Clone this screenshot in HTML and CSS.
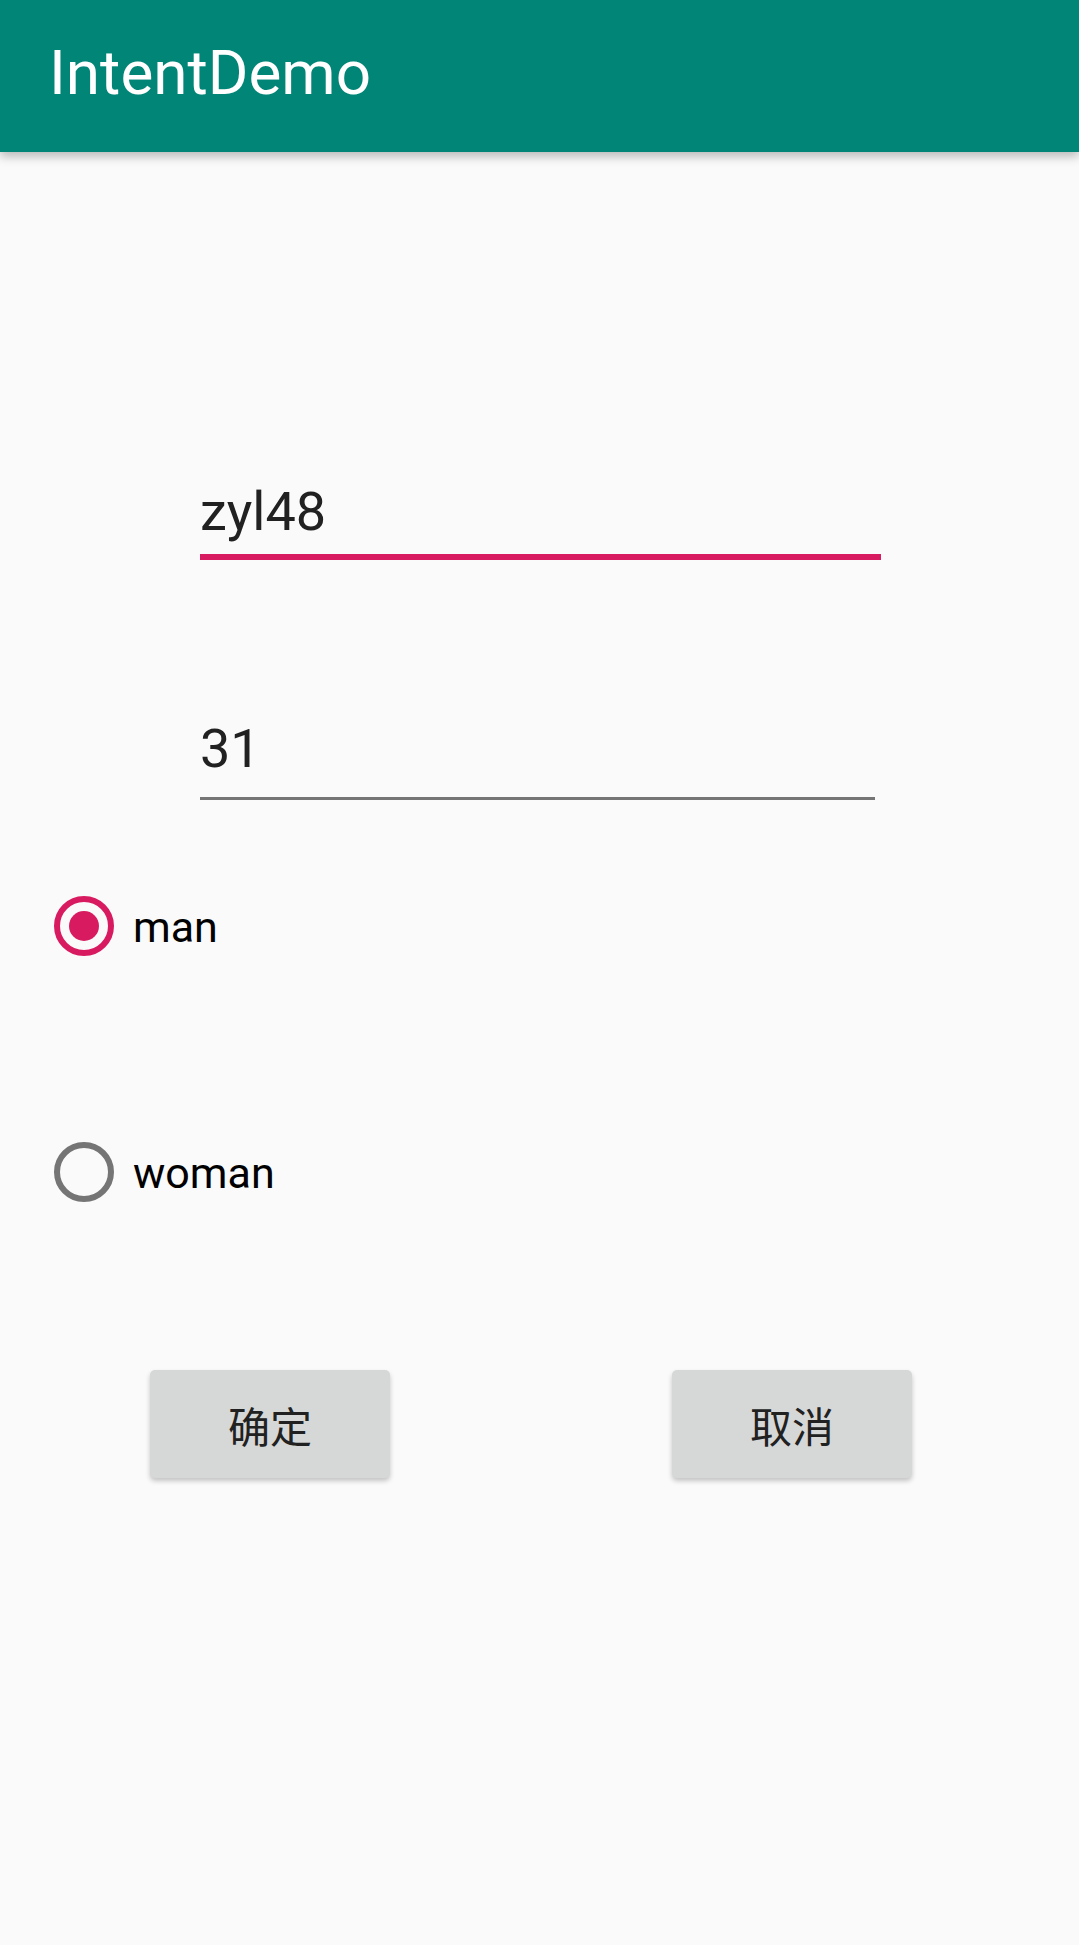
FILE: index.html
```html
<!DOCTYPE html>
<html lang="zh">
<head>
<meta charset="UTF-8">
<meta name="viewport" content="width=device-width, initial-scale=1">
<title>IntentDemo</title>
<link rel="stylesheet" href="styles.css">
</head>
<body>
<div class="app-bar">
  <h1 class="app-title">IntentDemo</h1>
</div>

<div class="content">
  <div class="field field-focused">
    <span class="field-text">zyl48</span>
  </div>
  <div class="field field-age">
    <span class="field-text">31</span>
  </div>

  <div class="radio-group">
    <div class="radio-row">
      <span class="radio radio-checked"></span>
      <span class="radio-label">man</span>
    </div>
    <div class="radio-row">
      <span class="radio"></span>
      <span class="radio-label">woman</span>
    </div>
  </div>

  <div class="button-row">
    <button class="btn">确定</button>
    <button class="btn">取消</button>
  </div>
</div>
</body>
</html>
```

FILE: styles.css
```css
body {
  margin: 0;
  background-color: #fafafa;
  font-family: Roboto, "Noto Sans CJK SC", sans-serif;
  width: 1079px;
  min-height: 1945px;
}
.app-bar {
  height: 152px;
  background-color: #008577;
  box-shadow: 0 4px 10px rgba(0, 0, 0, 0.28);
}
.app-title {
  margin: 0;
  padding: 0 0 6px 49px;
  font-size: 62px;
  font-weight: 400;
  line-height: 146px;
  color: #fff;
}
.content {
  display: flex;
  flex-direction: column;
}
.field {
  margin-left: 200px;
  border-bottom: 3px solid #757575;
  padding-bottom: 16px;
  width: 675px;
}
.field-text {
  display: block;
  font-size: 54px;
  line-height: 64px;
  color: #212121;
}
.field-focused {
  margin-top: 328px;
  width: 681px;
  padding-bottom: 10px;
  border-bottom: 6px solid #d81b60;
}
.field-age {
  margin-top: 157px;
}
.radio-group {
  display: flex;
  flex-direction: column;
  gap: 186px;
  margin-top: 96px;
  margin-left: 54px;
}
.radio-row {
  display: flex;
  align-items: flex-start;
  gap: 19px;
  height: 60px;
}
.radio {
  width: 60px;
  height: 60px;
  box-sizing: border-box;
  border: 6.5px solid #757575;
  border-radius: 50%;
  display: flex;
  justify-content: center;
  align-items: center;
}
.radio-checked {
  border-color: #d81b60;
}
.radio-checked::after {
  content: "";
  width: 30px;
  height: 30px;
  border-radius: 50%;
  background-color: #d81b60;
}
.radio-label {
  padding-top: 2px;
  font-size: 43px;
  line-height: 58px;
  color: #000;
}
.button-row {
  display: flex;
  gap: 282px;
  margin-top: 168px;
  margin-left: 150px;
}
.btn {
  width: 240px;
  height: 108px;
  border: none;
  border-radius: 5px;
  background-color: #d6d7d7;
  box-shadow: 0 3px 5px rgba(0, 0, 0, 0.22);
  font-family: "Noto Sans CJK SC", sans-serif;
  font-size: 42px;
  color: #212121;
  padding: 0;
}
```
